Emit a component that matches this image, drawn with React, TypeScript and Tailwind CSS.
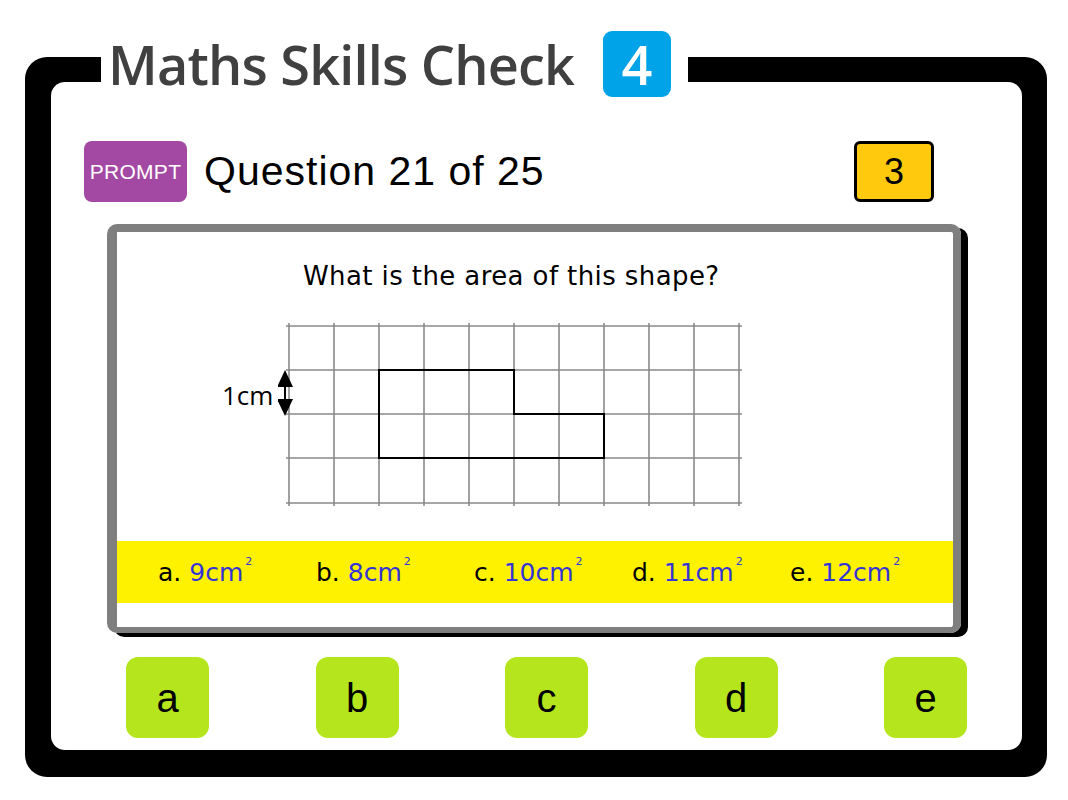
import React from 'react'

const comic = { fontFamily: '"Comic Sans MS", "DejaVu Sans", sans-serif' }

const answers = [
  { letter: 'a.', value: '9cm' },
  { letter: 'b.', value: '8cm' },
  { letter: 'c.', value: '10cm' },
  { letter: 'd.', value: '11cm' },
  { letter: 'e.', value: '12cm' },
]

function GridDiagram(): React.JSX.Element {
  const xs = Array.from({ length: 11 }, (_, i) => 11 + i * 45)
  const ys = [6, 50, 94, 138, 183]
  return (
    <svg width="467" height="188" viewBox="0 0 467 188">
      {xs.map((x) => (
        <line key={'v' + x} x1={x} y1={3} x2={x} y2={186} stroke="#8a8a8a" strokeWidth="1.6" />
      ))}
      {ys.map((y) => (
        <line key={'h' + y} x1={8} y1={y} x2={464} y2={y} stroke="#8a8a8a" strokeWidth="1.6" />
      ))}
      <path d="M101 50 H236 V94 H326 V138 H101 Z" fill="none" stroke="#000" strokeWidth="2" />
      {/* 1cm double arrow */}
      <line x1={7} y1={62} x2={7} y2={84} stroke="#000" strokeWidth="2" />
      <polygon points="7,50 -1,67 15,67" fill="#000" />
      <polygon points="7,96 -1,79 15,79" fill="#000" />
    </svg>
  )
}

export default function App(): React.JSX.Element {
  return (
    <div className="h-[800px] w-[1068px] bg-white pt-[57px] pl-[25px]">
      <div className="relative h-[720px] w-[1022px] rounded-[22px] bg-black pt-[25px] pr-[25px] pb-[27px] pl-[26px]">
        {/* title sitting over the frame */}
        <div
          className="absolute top-[-26px] left-[76px] flex h-[66px] w-[587px] items-center bg-white pl-[7px]"
          style={{ fontFamily: '"Open Sans", sans-serif' }}
        >
          <span className="text-[54px] leading-none font-semibold tracking-[-0.8px] text-[#404040]">
            Maths Skills Check
          </span>
          <span className="ml-auto mr-[17px] flex h-[66px] w-[68px] items-center justify-center rounded-[9px] bg-[#00a2e8] text-[54px] leading-none font-semibold text-white">
            4
          </span>
        </div>

        <div className="flex h-full w-full flex-col rounded-[14px] bg-white">
          {/* header */}
          <div
            className="mt-[59px] mr-[88px] ml-[33px] flex h-[61px] items-center"
            style={{ fontFamily: '"Liberation Sans", Arial, sans-serif' }}
          >
            <div className="flex h-[61px] w-[103px] items-center justify-center rounded-[8px] bg-[#a349a4] text-[21px] tracking-[0.3px] text-white">
              PROMPT
            </div>
            <div className="ml-[17px] text-[41px] leading-none tracking-[1px] text-black">Question 21 of 25</div>
            <div className="ml-auto flex h-[61px] w-[80px] items-center justify-center rounded-[6px] border-[3px] border-black bg-[#ffc90e] text-[36px] text-black">
              3
            </div>
          </div>

          {/* question card */}
          <div className="mt-[22px] ml-[56px] h-[409px] w-[854px] rounded-[10px] border-t-[8px] border-r-[8px] border-b-[6px] border-l-[10px] border-[#7f7f7f] shadow-[7px_4px_0_0_#000]">
            <div className="flex h-full w-full flex-col overflow-hidden rounded-[4px] bg-white">
              <div className="mt-[27px] pl-[186px] text-[26px] leading-[34px] tracking-[0.4px] text-black" style={comic}>
                What is the area of this shape?
              </div>
              <div className="mt-[27px] ml-[105px] flex">
                <span
                  className="mt-[60px] w-[56px] pr-[5px] text-right text-[26px] leading-[30px] text-black"
                  style={{ fontFamily: '"Open Sans", sans-serif' }}
                >
                  1cm
                </span>
                <GridDiagram />
              </div>
              <div className="mt-[33px] flex h-[62px] items-center bg-[#fff200] pl-[41px]" style={comic}>
                {answers.map((a) => (
                  <div key={a.letter} className="w-[158px] text-[25px] leading-none">
                    <span className="text-black">{a.letter}</span>{' '}
                    <span className="text-[#3434d9]">
                      {a.value}
                      <sup className="top-[-16px] ml-[2px] text-[11px]">2</sup>
                    </span>
                  </div>
                ))}
              </div>
            </div>
          </div>

          {/* answer buttons */}
          <div
            className="mt-[24px] ml-[75px] flex gap-[106.5px]"
            style={{ fontFamily: '"Liberation Sans", Arial, sans-serif' }}
          >
            {['a', 'b', 'c', 'd', 'e'].map((l) => (
              <div
                key={l}
                className="flex h-[81px] w-[83px] items-center justify-center rounded-[12px] bg-[#b5e61d] text-[40px] text-black"
              >
                {l}
              </div>
            ))}
          </div>
        </div>
      </div>
    </div>
  )
}
